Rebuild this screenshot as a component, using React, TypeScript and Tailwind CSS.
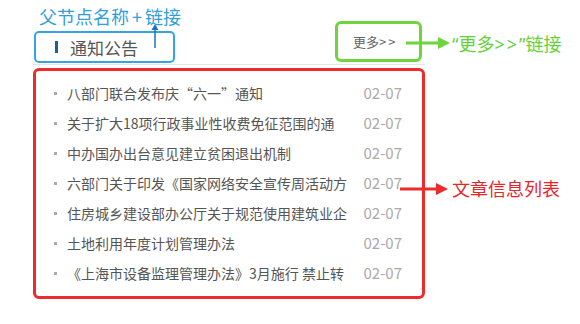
import React from 'react';

const articles = [
  '八部门联合发布庆“六一”通知',
  '关于扩大18项行政事业性收费免征范围的通',
  '中办国办出台意见建立贫困退出机制',
  '六部门关于印发《国家网络安全宣传周活动方',
  '住房城乡建设部办公厅关于规范使用建筑业企',
  '土地利用年度计划管理办法',
  '《上海市设备监理管理办法》3月施行 禁止转',
];

export default function App() {
  return (
    <div className="relative w-[580px] h-[324px] overflow-hidden bg-white pt-[21px] pl-[33px] font-['Noto_Sans_CJK_SC',sans-serif]">
      {/* Widget */}
      <div className="w-[392px]">
        {/* Header */}
        <div className="flex h-[44px] items-end justify-between border-b border-[#e6e6e6]">
          <div className="mb-[1px] ml-[1px] flex h-[32px] w-[141px] items-center gap-[12px] rounded-[5px] border-[2.5px] border-[#34a4e6] pl-[19px]">
            <span className="h-[12px] w-[3px] bg-[#1f5e9c]" />
            <span className="text-[17px] leading-none text-[#555]">通知公告</span>
          </div>
          <div className="mb-[2px] mr-[3px] flex h-[41px] w-[87px] items-center rounded-[6px] border-[3px] border-[#6cd63c] pl-[15px]">
            <span className="text-[13px] leading-none text-[#666]">
              更多<span className="tracking-[2px]">&gt;&gt;</span>
            </span>
          </div>
        </div>

        {/* Article list */}
        <ul className="mt-[3px] h-[231px] rounded-[6px] border-[3px] border-[#ec2b2b] pt-[7px] pl-[18px] pr-[20px]">
          {articles.map((title, i) => (
            <li key={i} className="flex h-[30px] items-center">
              <span className="h-[3px] w-[3px] bg-[#aaa]" />
              <span className="ml-[10px] w-[285px] overflow-hidden whitespace-nowrap text-[14px] text-[#555]">
                {title}
              </span>
              <span className="ml-auto text-[15px] text-[#aaa]">02-07</span>
            </li>
          ))}
        </ul>
      </div>

      {/* Annotations */}
      <div className="absolute left-[39px] top-[5px] text-[18px] leading-[22px] text-[#2f9fdc]">
        父节点名称<span className="px-[3px]">+</span>链接
      </div>
      <svg className="absolute left-[150px] top-[24px]" width="10" height="26" viewBox="0 0 10 26">
        <line x1="5" y1="5" x2="5" y2="24" stroke="#1e73b8" strokeWidth="1.5" />
        <polygon points="5,0 1.5,6 8.5,6" fill="#1e73b8" />
      </svg>

      <svg className="absolute left-[406px] top-[35px]" width="46" height="16" viewBox="0 0 46 16">
        <line x1="0" y1="8" x2="34" y2="8" stroke="#6cd63c" strokeWidth="3" />
        <polygon points="32,2 44,8 32,14" fill="#6cd63c" />
      </svg>
      <div className="absolute left-[452px] top-[32px] text-[18px] leading-[22px] text-[#66d13a]">
        <span className="font-['Noto_Sans',sans-serif]">“</span>更多
        <span className="font-['Noto_Sans',sans-serif] tracking-[2px]">&gt;&gt;</span>
        <span className="font-['Noto_Sans',sans-serif]">”</span>链接
      </div>

      <svg className="absolute left-[400px] top-[181px]" width="50" height="16" viewBox="0 0 50 16">
        <line x1="0" y1="8" x2="38" y2="8" stroke="#ec2b2b" strokeWidth="3" />
        <polygon points="36,2 48,8 36,14" fill="#ec2b2b" />
      </svg>
      <div className="absolute left-[452px] top-[177px] text-[18px] leading-[22px] text-[#e8262a]">
        文章信息列表
      </div>
    </div>
  );
}
